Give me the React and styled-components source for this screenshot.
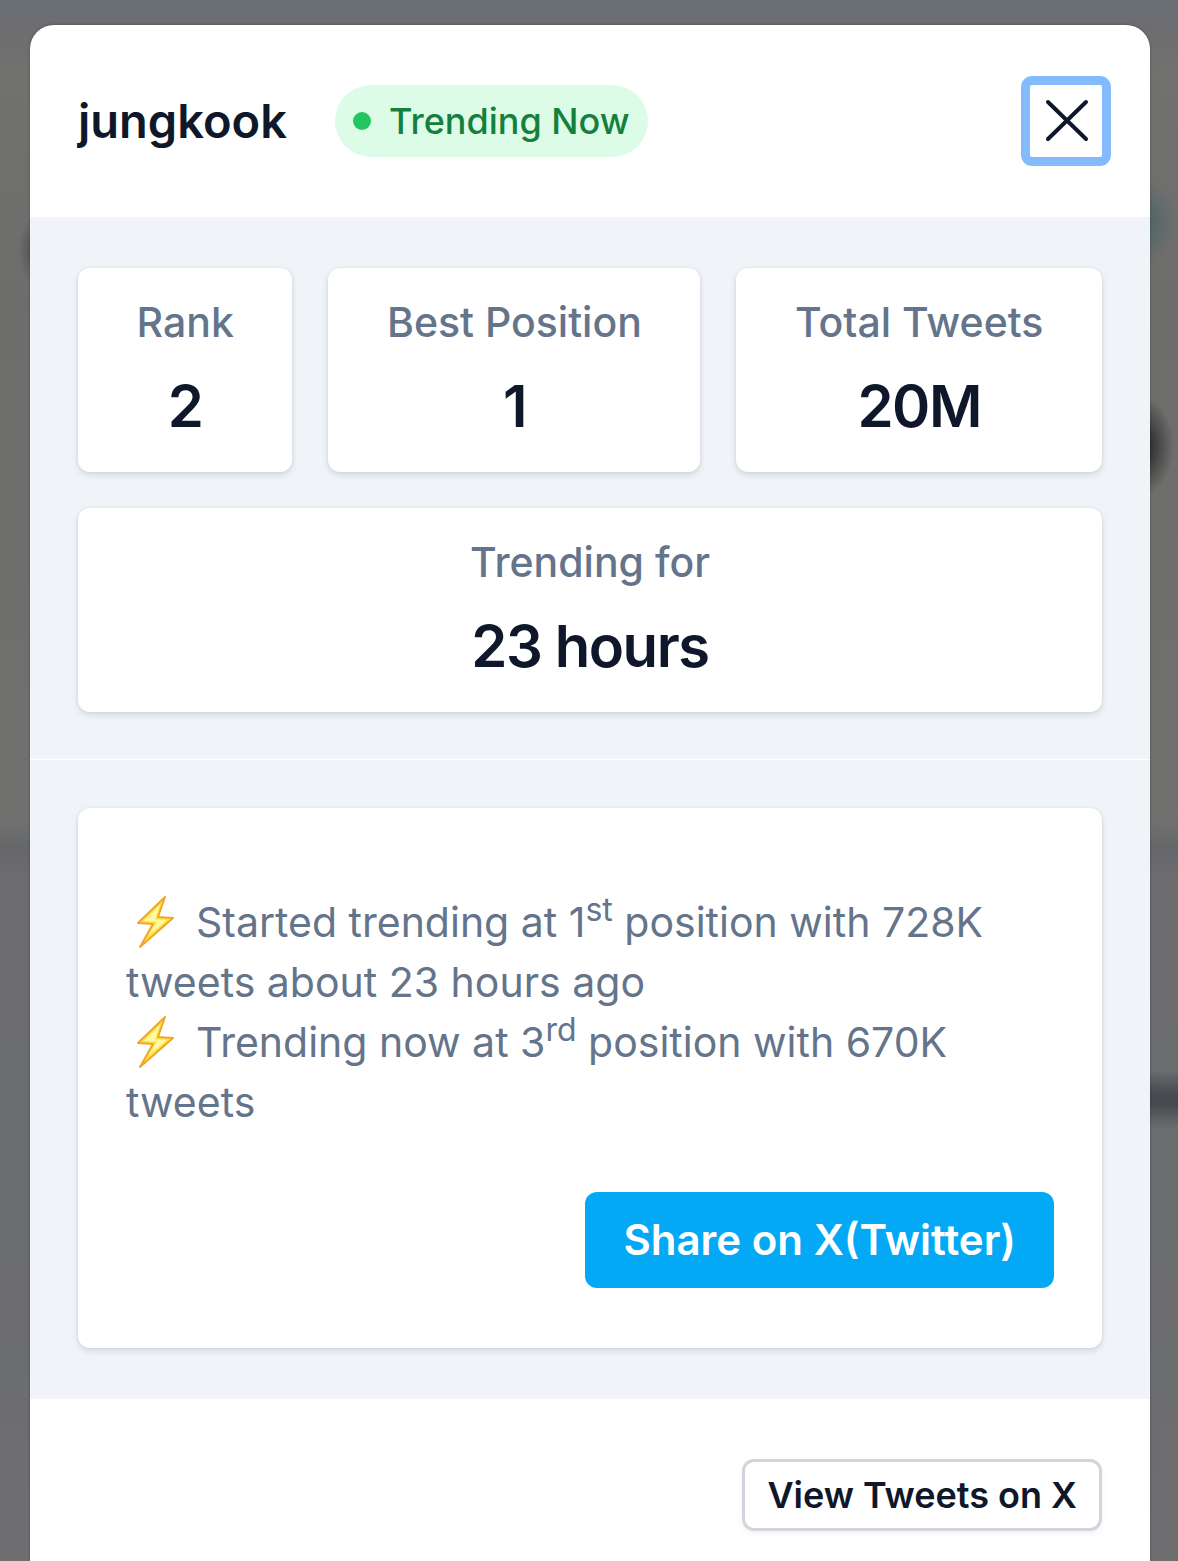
import React from "react";
import styled, { createGlobalStyle } from "styled-components";

const Global = createGlobalStyle`
  *, *::before, *::after { box-sizing: border-box; }
  body { margin: 0; font-family: Inter, "Liberation Sans", sans-serif; color: #0f172a; }
  h1, p, dl, dt, dd { margin: 0; }
`;

const Backdrop = styled.div`
  min-height: 100vh;
  display: flex;
  padding: 25px 28px 0 30px;
  background:
    radial-gradient(ellipse 32px 50px at 1142px 446px, #1c1c1c 0%, #2c2c2caa 45%, #6e6e6e00 100%),
    radial-gradient(ellipse 30px 40px at 1146px 222px, #4f6468 0%, #6e6e6e00 100%),
    radial-gradient(ellipse 14px 32px at 32px 250px, #555553 0%, #6e6e6e00 100%),
    linear-gradient(to bottom, #6e6e7000 1070px, #494a50 1094px, #494a50 1104px, #6e6e7000 1128px) right top / 40px 100% no-repeat,
    linear-gradient(to bottom, #687074 0, #6d6d71 24px, #71716f 70px, #6d6d6c 300px, #70706e 820px, #66676a 848px, #6d6d70 880px, #6b6c6e 1150px, #6e6e70 100%);
`;

const Dialog = styled.section`
  flex: 1;
  min-width: 0;
  display: flex;
  flex-direction: column;
  border-radius: 24px 24px 0 0;
  background: #fff;
  overflow: hidden;
  box-shadow: 0 0 3px rgba(0, 0, 0, 0.3);
`;

const Header = styled.header`
  display: flex;
  align-items: center;
  gap: 48px;
  padding: 60px 48px;
`;

const Title = styled.h1`
  font-size: 47px;
  line-height: 72px;
  font-weight: 600;
`;

const Status = styled.span`
  display: flex;
  align-items: center;
  gap: 18px;
  height: 72px;
  padding: 0 18px;
  border-radius: 36px;
  background: #dcfce7;
  color: #15803d;
  font-size: 36px;
  font-weight: 500;
  white-space: nowrap;
`;

const Dot = styled.span`
  width: 18px;
  height: 18px;
  border-radius: 50%;
  background: #22c55e;
`;

const CloseButton = styled.button`
  display: grid;
  place-items: center;
  width: 72px;
  height: 72px;
  margin-left: auto;
  padding: 0;
  border: 0;
  border-radius: 2px;
  background: #fff;
  color: #0f172a;
  outline: 9px solid #83bbfd;
`;

const Body = styled.div`
  border: solid #f1f3f7;
  border-width: 3px 0;
  background: #f0f4f9;
`;

const Stats = styled.dl`
  display: flex;
  flex-wrap: wrap;
  gap: 36px;
  padding: 48px;
  box-shadow: inset 0 -1px #fff;
`;

const Card = styled.div`
  border-radius: 12px;
  background: #fff;
  box-shadow: 0 3px 6px rgba(15, 23, 42, 0.12), 0 0 3px rgba(15, 23, 42, 0.08);
`;

const Stat = styled(Card)`
  flex: 1 0 auto;
  display: grid;
  gap: 12px;
  padding: 24px 48px;
  text-align: center;
`;

const StatLabel = styled.dt`
  color: #64748b;
  font-size: 41px;
  line-height: 60px;
  font-weight: 500;
`;

const StatValue = styled.dd`
  font-size: 58px;
  line-height: 84px;
  font-weight: 600;
  letter-spacing: -0.025em;
`;

const Activity = styled.div`
  padding: 48px;
`;

const ActivityCard = styled(Card)`
  display: flex;
  flex-direction: column;
  gap: 60px;
  padding: 84px 48px 60px;
`;

const Events = styled.div`
  color: #64748b;
  font-size: 41px;
  line-height: 60px;
`;

const Ordinal = styled.sup`
  font-size: 32px;
  line-height: 0;
  vertical-align: 16px;
`;

const BoltIcon = styled.svg`
  width: 58px;
  height: 54px;
  margin-right: 12px;
  vertical-align: -12px;
`;

const ShareButton = styled.button`
  align-self: flex-end;
  height: 96px;
  padding: 0 38px;
  border: 0;
  border-radius: 12px;
  background: #03a9f4;
  color: #fff;
  font: 600 42px/60px Inter, "Liberation Sans", sans-serif;
`;

const Footer = styled.footer`
  flex: 1;
  display: flex;
  justify-content: flex-end;
  align-items: flex-start;
  padding: 60px 48px 30px;
`;

const ViewLink = styled.a`
  display: flex;
  align-items: center;
  height: 72px;
  padding: 0 22px;
  border: 3px solid #d1d5db;
  border-radius: 12px;
  color: #0f172a;
  font-size: 36px;
  font-weight: 600;
  text-decoration: none;
  box-shadow: 0 3px 6px rgba(0, 0, 0, 0.05);
`;

const stats = [
  { label: "Rank", value: "2" },
  { label: "Best Position", value: "1" },
  { label: "Total Tweets", value: "20M" },
  { label: "Trending for", value: "23 hours" },
];

const events = [
  { lead: "Started trending at 1", suffix: "st", rest: " position with 728K tweets about 23 hours ago" },
  { lead: "Trending now at 3", suffix: "rd", rest: " position with 670K tweets" },
];

function Bolt() {
  return (
    <BoltIcon viewBox="0 0 58 54" role="img" aria-label="Lightning">
      <path d="M39 2 L12 28 L27 29 L14 52 L47 23 L32 22 Z" fill="#ffe445" stroke="#f2a52c" strokeWidth="2" strokeLinejoin="round" />
      <path d="M34 10 L18 26 L31 26.500 L22 41 L41 25 L29 24.500 Z" fill="#fff9a0" />
    </BoltIcon>
  );
}

export default function App() {
  return (
    <>
      <Global />
      <Backdrop>
        <Dialog role="dialog" aria-labelledby="trend-title">
          <Header>
            <Title id="trend-title">jungkook</Title>
            <Status><Dot />Trending Now</Status>
            <CloseButton type="button" aria-label="Close">
              <svg width="48" height="48" viewBox="0 0 48 48" fill="none" stroke="currentColor" strokeWidth="4" strokeLinecap="round">
                <path d="M6 5 L44 42 M44 5 L6 42" />
              </svg>
            </CloseButton>
          </Header>
          <Body>
            <Stats>
              {stats.map(({ label, value }) => (
                <Stat key={label}>
                  <StatLabel>{label}</StatLabel>
                  <StatValue>{value}</StatValue>
                </Stat>
              ))}
            </Stats>
            <Activity>
              <ActivityCard>
                <Events>
                  {events.map(({ lead, suffix, rest }) => (
                    <p key={lead}>
                      <Bolt />{lead}<Ordinal>{suffix}</Ordinal>{rest}
                    </p>
                  ))}
                </Events>
                <ShareButton type="button">Share on X(Twitter)</ShareButton>
              </ActivityCard>
            </Activity>
          </Body>
          <Footer>
            <ViewLink href="#tweets">View Tweets on X</ViewLink>
          </Footer>
        </Dialog>
      </Backdrop>
    </>
  );
}
